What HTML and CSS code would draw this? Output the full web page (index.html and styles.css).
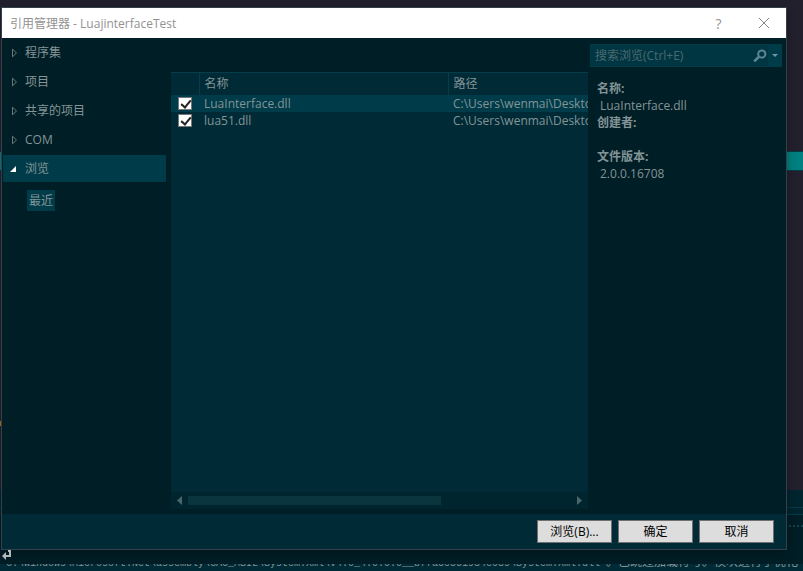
FILE: index.html
```html
<!DOCTYPE html>
<html lang="zh-CN">
<head>
<meta charset="utf-8">
<title>引用管理器</title>
<link rel="stylesheet" href="styles.css">
</head>
<body>
<div class="backdrop" aria-hidden="true">
  <div class="backdrop-tab"></div>
  <div class="backdrop-mark"></div>
  <div class="backdrop-panel"><div class="backdrop-rule"></div><div class="backdrop-grip"></div></div>
</div>
<main class="dialog">
  <header class="titlebar">
    <h1 class="title">引用管理器 - LuajinterfaceTest</h1>
    <button class="title-button" type="button" aria-label="帮助">?</button>
    <button class="title-button" type="button" aria-label="关闭">
      <svg width="12" height="12" viewBox="0 0 12 12"><path d="M1 1 11 11M11 1 1 11" fill="none" stroke="#858585"/></svg>
    </button>
  </header>
  <div class="content">
    <nav class="sidebar">
      <button class="nav-item" type="button"><svg class="arrow" viewBox="0 0 8 10"><path d="M2.5 1.2 6.5 5 2.5 8.8Z" fill="none" stroke="#66797c"/></svg>程序集</button>
      <button class="nav-item" type="button"><svg class="arrow" viewBox="0 0 8 10"><path d="M2.5 1.2 6.5 5 2.5 8.8Z" fill="none" stroke="#66797c"/></svg>项目</button>
      <button class="nav-item" type="button"><svg class="arrow" viewBox="0 0 8 10"><path d="M2.5 1.2 6.5 5 2.5 8.8Z" fill="none" stroke="#66797c"/></svg>共享的项目</button>
      <button class="nav-item" type="button"><svg class="arrow" viewBox="0 0 8 10"><path d="M2.5 1.2 6.5 5 2.5 8.8Z" fill="none" stroke="#66797c"/></svg>COM</button>
      <button class="nav-item selected" type="button"><svg class="arrow" viewBox="0 0 8 10"><path d="M6 2V8H0Z" fill="#fff"/></svg>浏览</button>
      <button class="nav-sub" type="button">最近</button>
    </nav>
    <section class="list">
      <div class="list-view">
        <table class="files">
          <colgroup><col class="col-check"><col class="col-name"><col class="col-path"></colgroup>
          <thead><tr><th></th><th>名称</th><th>路径</th></tr></thead>
          <tbody>
            <tr class="selected"><td><input class="check" type="checkbox" aria-label="LuaInterface.dll" checked></td><td>LuaInterface.dll</td><td>C:\Users\wenmai\Desktop\LuaInterface.dll</td></tr>
            <tr><td><input class="check" type="checkbox" aria-label="lua51.dll" checked></td><td>lua51.dll</td><td>C:\Users\wenmai\Desktop\lua51.dll</td></tr>
          </tbody>
        </table>
      </div>
      <div class="scrollbar">
        <svg width="5" height="9" viewBox="0 0 5 9"><path d="M5 0V9L0 4.5Z" fill="#4a666c"/></svg>
        <div class="track"><div class="thumb"></div></div>
        <svg width="5" height="9" viewBox="0 0 5 9"><path d="M0 0V9L5 4.5Z" fill="#4a666c"/></svg>
      </div>
    </section>
    <aside class="side">
      <div class="search">
        <input class="search-input" type="text" aria-label="搜索浏览" placeholder="搜索浏览(Ctrl+E)">
        <button class="search-button" type="button" aria-label="搜索">
          <svg width="14" height="14" viewBox="0 0 14 14"><circle cx="8.8" cy="5" r="3.6" fill="none" stroke="#5a8592" stroke-width="2"/><path d="M6 7.8 1.2 12.4" stroke="#5a8592" stroke-width="2.6"/></svg>
        </button>
        <button class="search-more" type="button" aria-label="搜索选项">
          <svg width="6" height="3" viewBox="0 0 6 3"><path d="M0 0H6L3 3Z" fill="#6b98a3"/></svg>
        </button>
      </div>
      <dl class="details">
        <dt>名称:</dt><dd>LuaInterface.dll</dd>
        <dt>创建者:</dt><dd></dd>
        <dt>文件版本:</dt><dd>2.0.0.16708</dd>
      </dl>
    </aside>
  </div>
  <footer class="footer">
    <button class="action" type="button">浏览(B)...</button>
    <button class="action" type="button">确定</button>
    <button class="action" type="button">取消</button>
  </footer>
</main>
<div class="output">
  <svg class="return" width="10" height="11" viewBox="0 0 10 11"><path d="M6 1H8V6H3" fill="none" stroke="#b4babb" stroke-width="2"/><path d="M0 6 4 2V10Z" fill="#b4babb"/></svg>
  <div class="log"><p class="log-line">"C:\Windows\Microsoft.Net\assembly\GAC_MSIL\System.Xml\v4.0_4.0.0.0__b77a5c561934e089\System.Xml.dll"<span class="log-message">。已跳过加载符号。模块进行了优化</span></p></div>
</div>
</body>
</html>
```
FILE: styles.css
```css
* { box-sizing: border-box; }
body {
  margin: 0;
  min-height: 100vh;
  display: flex;
  flex-direction: column;
  overflow: hidden;
  background: #23202e;
  color: #839496;
  font: 12px/17px "Open Sans", "Noto Sans CJK SC", sans-serif;
}
button, input { font: inherit; color: inherit; margin: 0; padding: 0; border: 0; background: none; }
svg { display: block; flex: none; }

.backdrop { position: absolute; inset: 0; z-index: -1; overflow: hidden; }
.backdrop-tab { position: absolute; top: 151px; left: 0; right: 0; height: 20px; background: #008080; border: solid #043c47; border-width: 1px 0; }
.backdrop-mark { position: absolute; top: 421px; left: 0; width: 1px; height: 5px; background: #b8701c; }
.backdrop-panel { position: absolute; bottom: 0; left: 0; right: 0; height: 81px; background: #001e26; }
.backdrop-rule { height: 25px; padding-top: 17px; background: linear-gradient(#06394a, #06394a) 0 17px / 100% 1px no-repeat #00252f; border-bottom: 1px solid #06394a; }
.backdrop-grip { height: 5px; margin-top: 9px; background: radial-gradient(circle, #12414d 1px, transparent 1px) 0 0 / 4px 4px; }

.dialog {
  flex: 1;
  display: flex;
  flex-direction: column;
  margin: 7px 16px 0 1px;
  border: 1px solid #34404a;
  background: #001e26;
  box-shadow: 0 3px 10px rgba(0, 0, 0, .3);
}
.titlebar { display: flex; align-items: center; height: 30px; padding: 0 0 0 8px; background: #fff; color: #929292; }
.title { flex: 1; margin: 0; font-size: 12px; font-weight: 400; }
.title-button { display: flex; align-items: center; justify-content: center; width: 45px; height: 30px; font-size: 14px; }

.content { flex: 1; display: flex; min-height: 0; }
.sidebar { width: 163px; padding-top: 1px; margin-left: 1px; display: flex; flex-direction: column; align-items: flex-start; gap: 2px; }
.nav-item { display: flex; align-items: center; gap: 7px; width: 100%; height: 27px; padding-left: 7px; }
.nav-item.selected { background: #003b49; }
.arrow { width: 8px; height: 10px; }
.nav-sub { height: 21px; margin: 6px 0 0 24px; padding: 0 2px; background: #003b49; }

.list { flex: 1; min-width: 0; display: flex; flex-direction: column; margin: 34px 0 5px 5px; background: #002b36; }
.list-view { flex: 1; overflow: hidden; }
.files { width: 100%; table-layout: fixed; border-collapse: collapse; }
.col-check { width: 28px; }
.col-name { width: 249px; }
.files th, .files td { height: 17px; padding: 0 0 0 5px; text-align: left; font-weight: 400; line-height: 17px; white-space: nowrap; overflow: hidden; }
.files th { height: 22px; border-top: 1px solid #053e4b; border-left: 1px solid #053e4b; }
.files th:first-child { border-left: 0; }
.files td:first-child { padding-left: 7px; }
.files tr.selected { background: #003b49; }
.check { appearance: none; display: block; width: 14px; height: 13px; border: 1px solid #777; background: #fff; }
.check:checked::before { content: ""; display: block; width: 4px; height: 8px; margin: 0 0 0 4px; border: solid #222; border-width: 0 2px 2px 0; transform: rotate(40deg); }

.scrollbar { display: flex; align-items: center; gap: 6px; height: 17px; padding: 0 6px; background: #00252f; }
.track { flex: 1; }
.thumb { width: 66%; height: 9px; background: #0a343e; }

.side { width: 198px; padding: 6px 4px 0 2px; }
.search { display: flex; height: 23px; background: #003642; border: 1px solid #003b49; }
.search-input { flex: 1; min-width: 0; padding-left: 4px; outline: 0; }
.search-input::placeholder { color: #4b6a70; opacity: 1; }
.search-button { display: flex; align-items: center; justify-content: center; width: 16px; }
.search-more { display: flex; align-items: center; justify-content: center; width: 13px; background: #003b49; }
.details { margin: 13px 0 0 7px; }
.details dt { font-weight: 700; }
.details dd { margin: 0 0 0 3px; min-height: 17px; }

.footer { display: flex; align-items: center; justify-content: flex-end; gap: 6px; height: 35px; padding: 0 12px; background: #002b36; }
.action { width: 75px; height: 23px; border: 1px solid #707070; background: #ddd; color: #000; }

.output { position: relative; height: 21px; padding-top: 14px; overflow: hidden; }
.return { position: absolute; top: 0; left: 2px; }
.log { display: flex; align-items: flex-end; height: 7px; overflow: hidden; background: #002b36; }
.log-line { margin: 0; white-space: pre; font: 10px/14px "Liberation Mono", "Noto Sans CJK SC", monospace; }
.log-message { font-size: 12px; }
```
